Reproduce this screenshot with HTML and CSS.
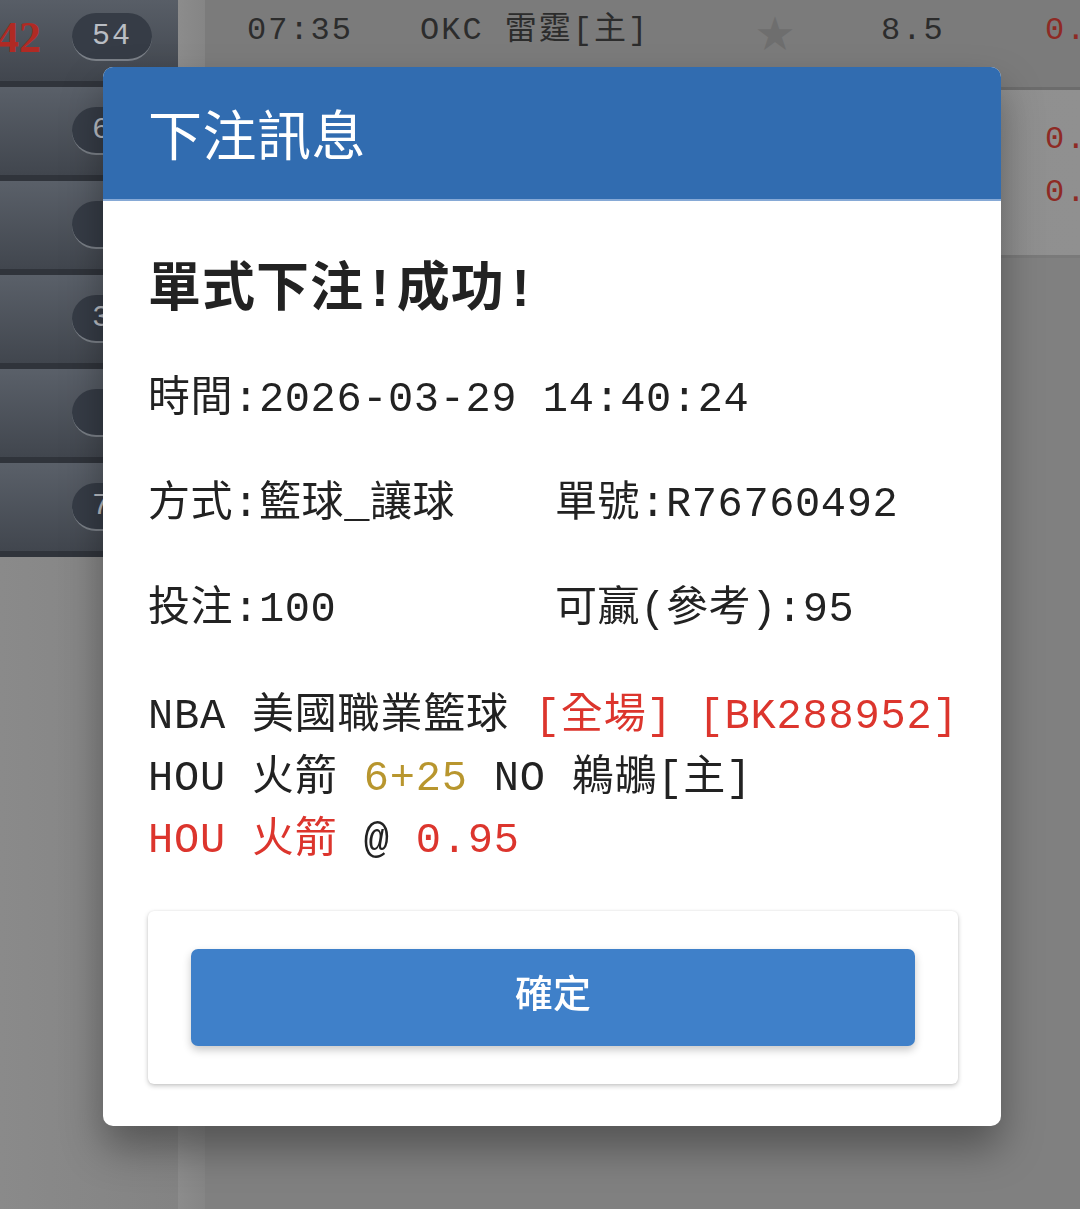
FILE: index.html
```html
<!DOCTYPE html>
<html lang="zh-Hant">
<head>
  <meta charset="UTF-8" />
  <meta name="viewport" content="width=device-width, initial-scale=1.0"/>
  <title>下注訊息</title>
  <link rel="stylesheet" href="styles.css">
</head>
<body>
  <div class="page">
    <aside class="side">
      <div class="side-row"><span class="score">42</span><span class="badge">54</span></div>
      <div class="side-row"><span class="badge">62</span></div>
      <div class="side-row"><span class="badge"></span></div>
      <div class="side-row"><span class="badge">38</span></div>
      <div class="side-row"><span class="badge"></span></div>
      <div class="side-row"><span class="badge">71</span></div>
    </aside>
    <div class="rail"></div>
    <main class="games">
      <div class="game-row">
        <span class="g-time">07:35</span>
        <span class="g-team">OKC 雷霆[主]</span>
        <span class="g-star">★</span>
        <span class="g-line">8.5</span>
        <span class="g-odds">0.</span>
      </div>
      <div class="game-row tall">
        <div class="g-odds-stack">
          <span class="g-odds">0.</span>
          <span class="g-odds">0.</span>
        </div>
      </div>
    </main>
  </div>

  <div class="overlay">
    <div class="modal">
      <div class="modal-head">下注訊息</div>
      <div class="modal-body">
        <h2 class="result-title">單式下注!成功!</h2>

        <div class="info-grid">
          <div class="info-row full">時間:2026-03-29 14:40:24</div>
          <div class="info-row">方式:籃球_讓球</div>
          <div class="info-row">單號:R76760492</div>
          <div class="info-row">投注:100</div>
          <div class="info-row">可贏(參考):95</div>
        </div>

        <div class="match">
          <p>NBA 美國職業籃球 <span class="red">[全場]</span> <span class="red">[BK288952]</span></p>
          <p>HOU 火箭 <span class="gold">6+25</span> NO 鵜鶘[主]</p>
          <p><span class="red">HOU 火箭</span> @ <span class="red">0.95</span></p>
        </div>

        <div class="action-card">
          <button type="button" class="ok-btn">確定</button>
        </div>
      </div>
    </div>
  </div>
</body>
</html>
```

FILE: styles.css
```css
body {
  margin: 0;
  background: #808080;
  font-family: "Liberation Mono", "Noto Sans CJK TC", monospace;
  overflow: hidden;
}

/* page behind the dialog (already dimmed) */
.page {
  display: flex;
  height: 100vh;
}

.side {
  width: 178px;
  flex-shrink: 0;
  margin-top: -7px;
  background: linear-gradient(to right, #8a8a8a, #838383);
}

.side-row {
  height: 88px;
  border-bottom: 6px solid #30343b;
  background: linear-gradient(to bottom, #5a6069, #41464e);
  display: flex;
  align-items: center;
  justify-content: space-between;
  padding-right: 26px;
}

.score {
  font-family: "Liberation Serif", serif;
  font-weight: bold;
  font-size: 44px;
  color: #b02a24;
  margin-left: -3px;
}

.badge {
  margin-left: auto;
  width: 80px;
  height: 48px;
  border-radius: 25px;
  background: #363c46;
  border-bottom: 2px solid #7b8088;
  box-sizing: border-box;
  color: #b9bdc3;
  font-size: 30px;
  display: flex;
  align-items: center;
  justify-content: center;
  letter-spacing: 2px;
}

.rail {
  width: 27px;
  flex-shrink: 0;
  background: linear-gradient(to right, #8c8c8c, #858585);
}

.games {
  flex: 1;
  min-width: 0;
  background: #808080;
}

.game-row {
  height: 90px;
  box-sizing: border-box;
  display: flex;
  align-items: flex-start;
  padding: 9px 0 0 42px;
  background: #7b7b7b;
  border-bottom: 3px solid #6c6c6c;
  color: #2c2c2c;
  font-size: 32px;
  line-height: 44px;
  letter-spacing: 2px;
  white-space: nowrap;
}

.game-row.tall {
  height: 168px;
  padding: 28px 0 0;
  background: linear-gradient(to right, #8a8a8a, #909090);
  border-bottom: 3px solid #7a7a7a;
  justify-content: flex-end;
}

.g-time { width: 173px; flex-shrink: 0; }
.g-team { width: 340px; flex-shrink: 0; }
.g-star { width: 125px; flex-shrink: 0; color: #6e6e6e; font-size: 38px; line-height: 56px; margin-left: -4px; }
.g-line { width: 164px; flex-shrink: 0; }
.g-odds { color: #8e2a24; }

.g-odds-stack {
  display: flex;
  flex-direction: column;
  gap: 9px;
  width: 35px;
  flex-shrink: 0;
}

/* dialog */
.overlay {
  position: fixed;
  inset: 0;
  display: flex;
  justify-content: center;
  align-items: flex-start;
  padding: 67px 0 0 24px;
}

.modal {
  width: 898px;
  background: #fff;
  border-radius: 10px;
  overflow: hidden;
  box-shadow: 0 22px 40px rgba(0, 0, 0, 0.35);
}

.modal-head {
  height: 132px;
  background: #316cb0;
  border-bottom: 2px solid #86a9d6;
  color: #fff;
  font-family: "Noto Sans CJK TC", sans-serif;
  font-size: 54px;
  font-weight: 400;
  line-height: 132px;
  padding-left: 45px;
  letter-spacing: 0.5px;
}

.modal-body {
  padding: 0 43px 42px 45px;
  color: #222;
}

.result-title {
  margin: 61px 0 26px;
  font-size: 53px;
  line-height: 60px;
  font-weight: bold;
  letter-spacing: 1px;
}

.info-grid {
  display: grid;
  grid-template-columns: 407px 1fr;
  font-size: 42px;
  line-height: 105px;
  letter-spacing: 0.6px;
}

.info-row {
  white-space: nowrap;
}

.info-row.full {
  grid-column: 1 / -1;
}

.match {
  margin-top: 23px;
  font-size: 42px;
  line-height: 62px;
  letter-spacing: 0.8px;
}

.match p {
  margin: 0;
  white-space: nowrap;
}

.red { color: #dc352d; }
.gold { color: #b8962e; }

.action-card {
  margin-top: 39px;
  padding: 38px 43px;
  background: #fff;
  border-radius: 6px;
  box-shadow: 0 2px 5px rgba(0, 0, 0, 0.22), 0 0 2px rgba(0, 0, 0, 0.08);
}

.ok-btn {
  display: block;
  width: 100%;
  height: 97px;
  padding: 0 0 14px;
  border: none;
  border-radius: 7px;
  background: #3f80c9;
  color: #fff;
  font-family: "Noto Sans CJK TC", sans-serif;
  font-size: 38px;
  font-weight: 500;
  box-shadow: 0 4px 8px rgba(0, 0, 0, 0.22);
  cursor: pointer;
}
```
